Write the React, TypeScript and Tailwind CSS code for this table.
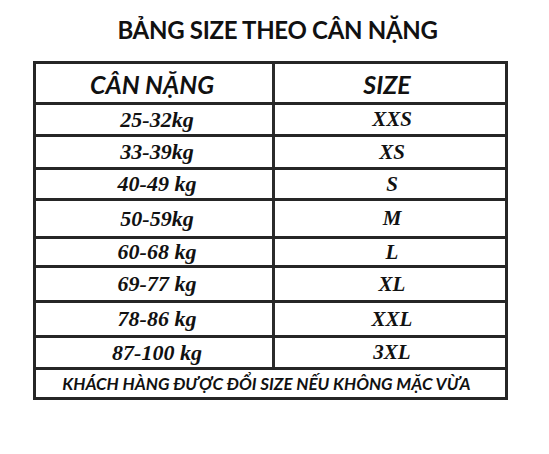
import React from "react";

const rows: { kg: string; size: string; h: string }[] = [
  { kg: "25-32kg", size: "XXS", h: "h-[32px]" },
  { kg: "33-39kg", size: "XS", h: "h-[33px]" },
  { kg: "40-49 kg", size: "S", h: "h-[31px]" },
  { kg: "50-59kg", size: "M", h: "h-[38px]" },
  { kg: "60-68 kg", size: "L", h: "h-[29px]" },
  { kg: "69-77 kg", size: "XL", h: "h-[35px]" },
  { kg: "78-86 kg", size: "XXL", h: "h-[35px]" },
  { kg: "87-100 kg", size: "3XL", h: "h-[32px]" },
];

const sans = "font-['Lato','Open_Sans',sans-serif]";
const serif = "font-['Liberation_Serif','Times_New_Roman',serif]";

export default function App() {
  return (
    <div className="w-[549px] h-[454px] bg-white text-[#111] overflow-hidden">
      {/* tiêu đề */}
      <div className={`${sans} pt-[18px] h-[61px] pl-[6px] text-center text-[24px] font-bold leading-none tracking-[-0.3px]`}>
        BẢNG SIZE THEO CÂN NẶNG
      </div>

      {/* bảng */}
      <div className="ml-[33px] w-[475px] border-[3px] border-[#262626] flex flex-col">
        <div className="grid grid-cols-[239px_1fr] h-[38px]">
          <div className={`${sans} border-r-[3px] border-[#2b2b2b] flex items-center justify-center text-[25px] italic font-bold leading-none pt-[3px] pr-[4px]`}>
            CÂN NẶNG
          </div>
          <div className={`${sans} flex items-center justify-center text-[25px] italic font-bold leading-none pt-[3px] pr-[6px]`}>
            SIZE
          </div>
        </div>

        {rows.map((r) => (
          <div key={r.kg} className={`grid grid-cols-[239px_1fr] border-t-[3px] border-[#262626] ${r.h}`}>
            <div className={`${serif} border-r-[3px] border-[#2b2b2b] flex items-center justify-center text-[22px] italic font-bold leading-none pl-[6px]`}>
              {r.kg}
            </div>
            <div className={`${serif} flex items-center justify-center text-[21px] italic font-bold leading-none pl-[4px]`}>
              {r.size}
            </div>
          </div>
        ))}

        <div className={`${sans} border-t-[3px] border-[#262626] h-[30px] flex items-center justify-center text-[17px] italic font-bold leading-none pr-[8px]`}>
          KHÁCH HÀNG ĐƯỢC ĐỔI SIZE NẾU KHÔNG MẶC VỪA
        </div>
      </div>
    </div>
  );
}
